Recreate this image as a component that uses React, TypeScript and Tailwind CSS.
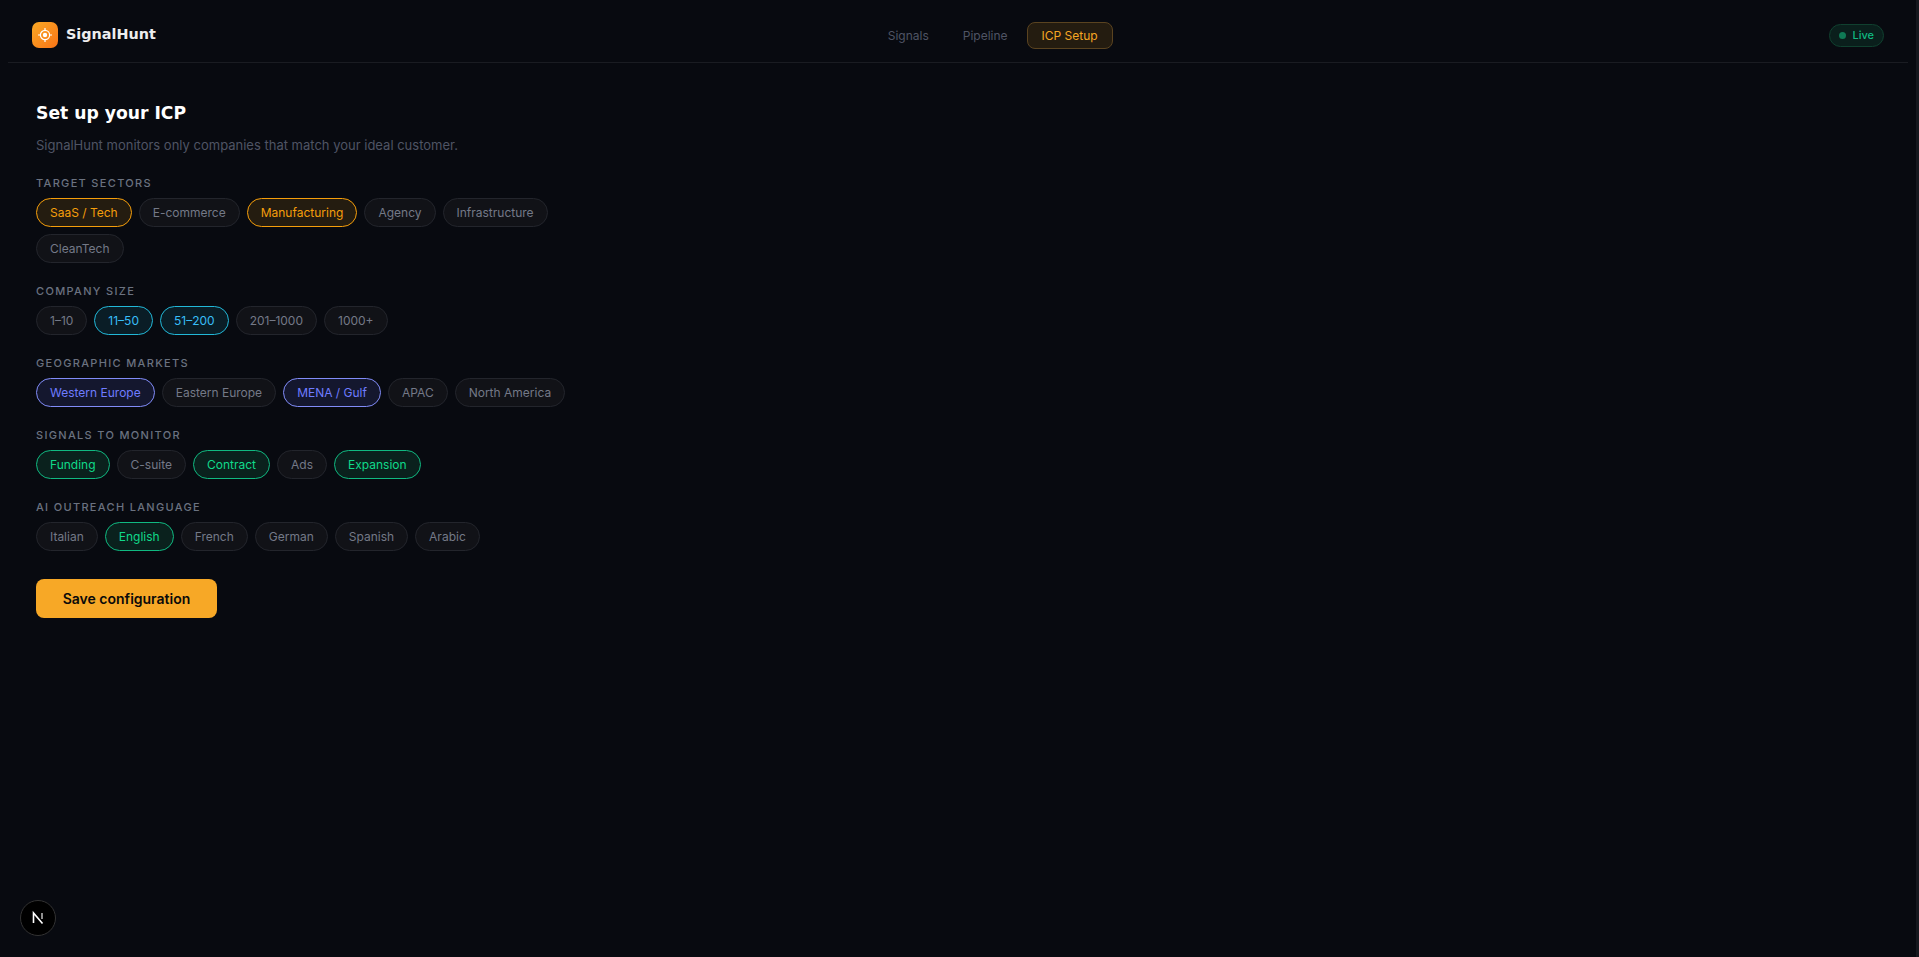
const sectors = [
  { label: "SaaS / Tech", on: true },
  { label: "E-commerce" },
  { label: "Manufacturing", on: true },
  { label: "Agency" },
  { label: "Infrastructure" },
  { label: "CleanTech" },
];
const sizes = [
  { label: "1–10" },
  { label: "11–50", on: true },
  { label: "51–200", on: true },
  { label: "201–1000" },
  { label: "1000+" },
];
const markets = [
  { label: "Western Europe", on: true },
  { label: "Eastern Europe" },
  { label: "MENA / Gulf", on: true },
  { label: "APAC" },
  { label: "North America" },
];
const signals = [
  { label: "Funding", on: true },
  { label: "C-suite" },
  { label: "Contract", on: true },
  { label: "Ads" },
  { label: "Expansion", on: true },
];
const languages = [
  { label: "Italian" },
  { label: "English", on: true },
  { label: "French" },
  { label: "German" },
  { label: "Spanish" },
  { label: "Arabic" },
];

const activeStyles = {
  amber: "border-[#f59e0b] bg-[#241c10] text-[#f59e0b]",
  cyan: "border-[#22b8d8] bg-[#0a1d26] text-[#38bdf8]",
  indigo: "border-[#818cf8] bg-[#14172e] text-[#6f7cff]",
  green: "border-[#10b981] bg-[#0a211d] text-[#10d98a]",
};

type Tone = keyof typeof activeStyles;

function Section({
  title,
  items,
  tone,
}: {
  title: string;
  items: { label: string; on?: boolean }[];
  tone: Tone;
}) {
  return (
    <div className="mb-[21px]">
      <div className="mb-2 text-[11px] leading-[14px] font-medium tracking-[0.12em] text-[#6b7280] uppercase">
        {title}
      </div>
      <div className="flex flex-wrap gap-[7px]">
        {items.map((item) => (
          <button
            key={item.label}
            className={`rounded-full border px-[13px] py-[6px] text-xs leading-[15px] ${
              item.on
                ? activeStyles[tone]
                : "border-[#23252c] bg-[#111217] text-[#747987]"
            }`}
          >
            {item.label}
          </button>
        ))}
      </div>
    </div>
  );
}

export default function App() {
  return (
    <div className="flex min-h-[957px] bg-[#080a10] font-['Inter',sans-serif]">
      <div className="min-w-0 flex-1">
        {/* Header */}
        <header className="mx-2 mt-2 flex h-[55px] items-center justify-between border-b border-[#1a1c22] pr-6 pl-6">
          <div className="flex items-center gap-2">
            <div className="flex h-[26px] w-[26px] items-center justify-center rounded-[7px] bg-gradient-to-br from-[#f9a825] to-[#f97316]">
              <svg width="16" height="16" viewBox="0 0 16 16" fill="none" stroke="white" strokeWidth="1.2">
                <circle cx="8" cy="8" r="4.6" />
                <circle cx="8" cy="8" r="2.2" fill="white" stroke="none" />
                <path d="M8 1v2.5M8 12.5V15M1 8h2.5M12.5 8H15" />
              </svg>
            </div>
            <span className="font-['DejaVu_Sans',sans-serif] text-[14.4px] font-bold text-[#eeeeee]">
              SignalHunt
            </span>
          </div>
          <nav className="flex items-center gap-1 text-xs leading-[15px]">
            <a className="rounded-lg border border-transparent px-[14px] py-[5px] text-[#4f5464]">Signals</a>
            <a className="rounded-lg border border-transparent px-[14px] py-[5px] text-[#4f5464]">Pipeline</a>
            <a className="rounded-lg border border-[#5a4320] bg-[#241c10] px-[14px] py-[5px] text-[#f5a623]">
              ICP Setup
            </a>
          </nav>
          <div className="flex h-[23px] items-center gap-[6px] rounded-full border border-[#10402f] bg-[#0a1f1c] px-[9px] text-[11px] font-medium text-[#10b981]">
            <span className="h-[7px] w-[7px] rounded-full bg-[#0f7a55]" />
            Live
          </div>
        </header>

        {/* ICP form */}
        <main className="px-9 pt-[38px]">
          <h1 className="mb-[10px] font-['DejaVu_Sans',sans-serif] text-[17.2px] leading-[24px] font-bold text-white">
            Set up your ICP
          </h1>
          <p className="mb-[21px] text-[13px] leading-[20px] text-[#4f5464]">
            SignalHunt monitors only companies that match your ideal customer.
          </p>
          <div className="w-[560px]">
            <Section title="Target sectors" items={sectors} tone="amber" />
            <Section title="Company size" items={sizes} tone="cyan" />
            <Section title="Geographic markets" items={markets} tone="indigo" />
            <Section title="Signals to monitor" items={signals} tone="green" />
            <Section title="AI outreach language" items={languages} tone="green" />
          </div>
          <button className="mt-[7px] h-[39px] w-[181px] rounded-lg bg-[#f7a826] text-sm font-semibold text-[#0a0a0a]">
            Save configuration
          </button>
        </main>
      </div>

      {/* window edge */}
      <div className="w-[3px] bg-[#16181e]" />

      {/* Dev badge */}
      <div className="fixed bottom-[21px] left-[20px] flex h-9 w-9 items-center justify-center rounded-full border border-[#333333] bg-black">
        <svg width="16" height="16" viewBox="0 0 16 16" fill="none">
          <path d="M3.5 13V3L12.5 13.5" stroke="white" strokeWidth="1.6" />
          <path d="M12 3v6" stroke="white" strokeOpacity="0.7" strokeWidth="1.6" />
        </svg>
      </div>
    </div>
  );
}
